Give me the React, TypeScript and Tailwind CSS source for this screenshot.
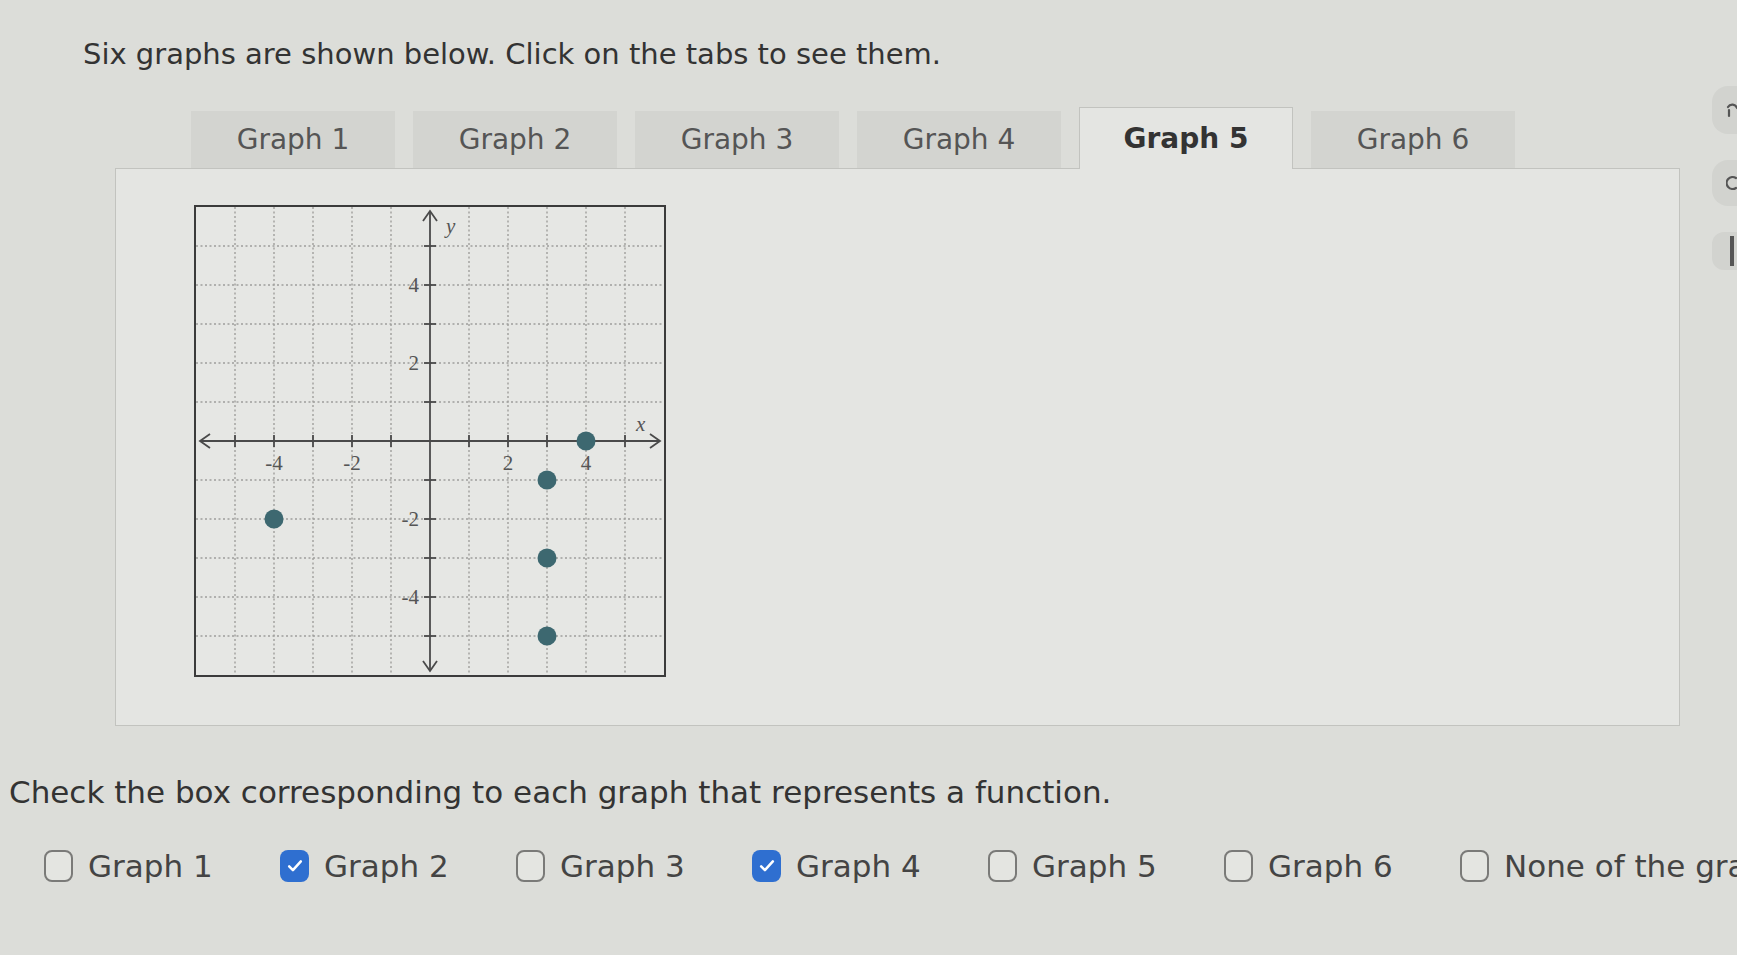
import React from 'react';

const tabs = ['Graph 1', 'Graph 2', 'Graph 3', 'Graph 4', 'Graph 5', 'Graph 6'];
const activeTab = 4;

const choices = [
  { label: 'Graph 1', checked: false },
  { label: 'Graph 2', checked: true },
  { label: 'Graph 3', checked: false },
  { label: 'Graph 4', checked: true },
  { label: 'Graph 5', checked: false },
  { label: 'Graph 6', checked: false },
  { label: 'None of the graphs', checked: false },
];

// graph 5 points
const points: [number, number][] = [
  [4, 0],
  [3, -1],
  [-4, -2],
  [3, -3],
  [3, -5],
];

const SIZE = 468;
const CELL = 39;
const O = SIZE / 2;
const px = (x: number) => O + x * CELL;
const py = (y: number) => O - y * CELL;
const units = [-5, -4, -3, -2, -1, 1, 2, 3, 4, 5];

const Graph: React.FC = () => (
  <div className="w-[472px] h-[472px] border-2 border-[#3b3b3b] bg-[#e6e7e4]">
    <svg width={SIZE} height={SIZE} viewBox={`0 0 ${SIZE} ${SIZE}`}>
      {/* dotted grid */}
      {units.map((u) => (
        <g key={u} stroke="#9f9f9c" strokeWidth={1.4} strokeDasharray="2 2.5">
          <line x1={px(u)} y1={0} x2={px(u)} y2={SIZE} />
          <line x1={0} y1={py(u)} x2={SIZE} y2={py(u)} />
        </g>
      ))}

      {/* axes */}
      <g stroke="#4a4a4a" strokeWidth={1.8} fill="none">
        <line x1={4} y1={O} x2={SIZE - 4} y2={O} />
        <line x1={O} y1={4} x2={O} y2={SIZE - 4} />
        <polyline points={`14,${O - 7} 4,${O} 14,${O + 7}`} />
        <polyline points={`${SIZE - 14},${O - 7} ${SIZE - 4},${O} ${SIZE - 14},${O + 7}`} />
        <polyline points={`${O - 7},14 ${O},4 ${O + 7},14`} />
        <polyline points={`${O - 7},${SIZE - 14} ${O},${SIZE - 4} ${O + 7},${SIZE - 14}`} />
        {units.map((u) => (
          <g key={u}>
            <line x1={px(u)} y1={O - 6} x2={px(u)} y2={O + 6} />
            <line x1={O - 6} y1={py(u)} x2={O + 6} y2={py(u)} />
          </g>
        ))}
      </g>

      {/* labels */}
      <g fill="#555" fontFamily="'Liberation Serif', serif" fontSize={21}>
        {[-4, -2, 2, 4].map((u) => (
          <text key={`x${u}`} x={px(u)} y={O + 29} textAnchor="middle">
            {u}
          </text>
        ))}
        {[-4, -2, 2, 4].map((u) => (
          <text key={`y${u}`} x={O - 11} y={py(u) + 7} textAnchor="end">
            {u}
          </text>
        ))}
        <text x={px(5.4)} y={O - 10} fontStyle="italic" fontSize={21} textAnchor="middle">
          x
        </text>
        <text x={O + 16} y={py(5.5) + 6} fontStyle="italic" fontSize={21}>
          y
        </text>
      </g>

      {points.map(([x, y]) => (
        <circle key={`${x},${y}`} cx={px(x)} cy={py(y)} r={9.5} fill="#3d6870" />
      ))}
    </svg>
  </div>
);

const CheckBox: React.FC<{ checked: boolean }> = ({ checked }) =>
  checked ? (
    <span className="w-[29px] h-[32px] rounded-[8px] bg-[#2f6fd0] flex items-center justify-center shrink-0">
      <svg width="20" height="20" viewBox="0 0 24 24" fill="none" stroke="#fff" strokeWidth={3} strokeLinecap="round" strokeLinejoin="round">
        <path d="M5 12.5l4.5 4.5L19 6.5" />
      </svg>
    </span>
  ) : (
    <span className="w-[29px] h-[32px] rounded-[8px] border-2 border-[#7a7a78] bg-[#e4e5e1] shrink-0" />
  );

export default function App() {
  return (
    <div className="relative w-[1737px] h-[955px] overflow-hidden bg-[#dcddd9] font-['DejaVu_Sans',Verdana,sans-serif]">
      <p className="pt-[37px] pl-[83px] text-[29px] leading-[35px] text-[#333]">
        Six graphs are shown below. Click on the tabs to see them.
      </p>

      {/* Tabs */}
      <div className="mt-[35px] ml-[191px] flex items-end gap-[18px]">
        {tabs.map((t, i) =>
          i === activeTab ? (
            <div
              key={t}
              className="relative z-10 -mb-px w-[214px] h-[62px] bg-[#e4e5e2] border border-b-0 border-[#c2c3bf] flex items-center justify-center text-[28px] font-bold text-[#333]"
            >
              {t}
            </div>
          ) : (
            <div
              key={t}
              className="w-[204px] h-[57px] bg-[#d3d4d0] flex items-center justify-center text-[28px] text-[#555]"
            >
              {t}
            </div>
          )
        )}
      </div>

      {/* Tab panel */}
      <div className="ml-[115px] w-[1565px] h-[558px] bg-[#e4e5e2] border border-[#c2c3bf] pt-[36px] pl-[78px]">
        <Graph />
      </div>

      <p className="mt-[48px] pl-[9px] text-[31px] leading-[37px] text-[#333] whitespace-nowrap">
        Check the box corresponding to each graph that represents a function.
      </p>

      {/* Choices */}
      <div className="mt-[35px] pl-[44px] flex">
        {choices.map((c) => (
          <label key={c.label} className="w-[236px] shrink-0 flex items-center gap-[15px] text-[31px] leading-[40px] text-[#444] whitespace-nowrap">
            <CheckBox checked={c.checked} />
            <span>{c.label}</span>
          </label>
        ))}
      </div>

      {/* side toolbar, mostly off screen */}
      <div className="absolute left-[1712px] top-[86px] flex flex-col gap-[26px]">
        <div className="w-[60px] h-[48px] rounded-l-[16px] bg-[#d2d3cf] pl-[14px] flex items-center">
          <svg width="12" height="20" viewBox="0 0 12 20" fill="none" stroke="#555" strokeWidth={2.2} strokeLinecap="round">
            <path d="M2 7a5 5 0 0 1 9 1" />
            <path d="M3 10v6" />
          </svg>
        </div>
        <div className="w-[60px] h-[46px] rounded-l-[16px] bg-[#d2d3cf] pl-[14px] flex items-center">
          <svg width="12" height="18" viewBox="0 0 12 18" fill="none" stroke="#555" strokeWidth={2.2} strokeLinecap="round">
            <path d="M10 4a6 6 0 1 0 0 10" />
          </svg>
        </div>
        <div className="w-[60px] h-[38px] rounded-l-[12px] bg-[#d2d3cf] pl-[18px] flex items-center">
          <span className="w-[4px] h-[30px] bg-[#555]" />
        </div>
      </div>
    </div>
  );
}
